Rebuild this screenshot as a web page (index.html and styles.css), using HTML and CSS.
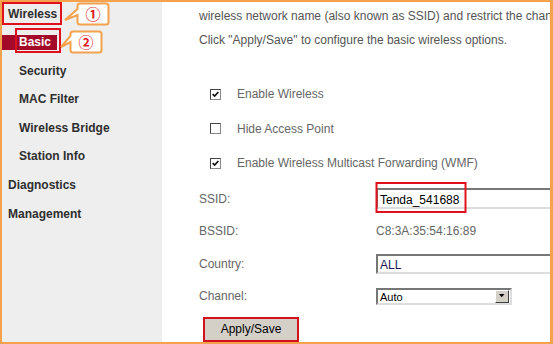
FILE: index.html
```html
<!DOCTYPE html>
<html lang="en">
<head>
    <meta charset="UTF-8">
    <title>Wireless - Basic</title>
    <link rel="stylesheet" href="styles.css">
</head>
<body>
    <div class="frame">
        <!-- Left menu -->
        <aside class="sidebar">
            <ul class="menu">
                <li class="menu-item">Wireless</li>
                <li class="menu-item sub"><span class="active">Basic</span></li>
                <li class="menu-item sub">Security</li>
                <li class="menu-item sub">MAC Filter</li>
                <li class="menu-item sub">Wireless Bridge</li>
                <li class="menu-item sub">Station Info</li>
                <li class="menu-item">Diagnostics</li>
                <li class="menu-item">Management</li>
            </ul>
        </aside>

        <!-- Settings page -->
        <main class="content">
            <p class="intro">wireless network name (also known as SSID) and restrict the channel set based on country requirements.</p>
            <p class="intro">Click "Apply/Save" to configure the basic wireless options.</p>

            <div class="checks">
                <div class="check-row"><span class="box checked"><svg viewBox="0 0 11 11"><path d="M2 5 L4.5 7.5 L9 2.5" /></svg></span>Enable Wireless</div>
                <div class="check-row"><span class="box"></span>Hide Access Point</div>
                <div class="check-row"><span class="box checked"><svg viewBox="0 0 11 11"><path d="M2 5 L4.5 7.5 L9 2.5" /></svg></span>Enable Wireless Multicast Forwarding (WMF)</div>
            </div>

            <div class="form">
                <div class="form-label">SSID:</div>
                <div class="form-field"><span class="field">Tenda_541688</span></div>
                <div class="form-label">BSSID:</div>
                <div class="form-field value">C8:3A:35:54:16:89</div>
                <div class="form-label">Country:</div>
                <div class="form-field"><span class="field country">ALL</span></div>
                <div class="form-label">Channel:</div>
                <div class="form-field">
                    <span class="select">Auto<span class="select-btn"><svg viewBox="0 0 9 5"><path d="M0 0 H7 L3.5 4 Z" /></svg></span></span>
                </div>
            </div>

            <button class="apply">Apply/Save</button>
        </main>

        <!-- Annotation marks drawn over the screenshot -->
        <svg class="notes" width="553" height="344" viewBox="0 0 553 344">
            <rect class="red-box" x="3" y="3" width="58" height="21" />
            <rect class="red-box" x="16" y="29" width="44" height="23" />
            <rect class="red-box" x="376.5" y="183" width="89" height="29" />
            <path class="callout" d="M80 3.5 H106 Q108.5 3.5 108.5 6 V22 Q108.5 24.5 106 24.5 H80 Q77.5 24.5 77.5 22 V15 L65 20 L77.5 9 V6 Q77.5 3.5 80 3.5 Z" />
            <path class="callout" d="M73 31.5 H99 Q101.5 31.5 101.5 34 V50 Q101.5 52.5 99 52.5 H73 Q70.5 52.5 70.5 50 V42 L61 47 L70.5 36 V34 Q70.5 31.5 73 31.5 Z" />
            <text class="num" x="93" y="19.5">①</text>
            <text class="num" x="86" y="47.5">②</text>
        </svg>
    </div>
</body>
</html>
```

FILE: styles.css
```css
body {
    margin: 0;
    padding: 0;
    font-family: "Liberation Sans", Arial, sans-serif;
    background: #fff;
}

.frame {
    position: relative;
    width: 553px;
    height: 344px;
    box-sizing: border-box;
    border: 2px solid #f4a24c;
    border-right-width: 3px;
    display: flex;
    overflow: hidden;
}

/* Sidebar */
.sidebar {
    width: 160px;
    flex: none;
    background: #eeeeee;
}

.menu {
    list-style: none;
    margin: -2.5px 0 0 0;
    padding: 0;
}

.menu-item {
    height: 28.6px;
    line-height: 28.6px;
    padding-left: 6px;
    font-size: 12px;
    font-weight: bold;
    color: #2e2e2e;
    white-space: nowrap;
}

.menu-item.sub {
    padding-left: 17px;
}

.active {
    display: inline-block;
    height: 15px;
    line-height: 15px;
    margin-left: -17px;
    padding: 0 6px 0 17px;
    background: #a30a2a;
    color: #fff;
}

/* Main content */
.content {
    flex: 1;
    min-width: 0;
    padding: 2px 0 0 37px;
    white-space: nowrap;
    overflow: hidden;
    font-size: 12px;
    color: #666;
}

.intro {
    margin: 0;
    height: 24px;
    line-height: 24px;
    color: #555;
}

.checks {
    margin-top: 25px;
}

.check-row {
    height: 34.5px;
    display: flex;
    align-items: center;
    padding-left: 11px;
}

.box {
    width: 9px;
    height: 9px;
    margin-right: 16px;
    border: 1px solid #888;
    border-top-color: #444;
    border-left-color: #444;
    background: #fff;
    display: inline-flex;
}

.box svg {
    width: 9px;
    height: 9px;
}

.box path {
    fill: none;
    stroke: #111;
    stroke-width: 2;
}

.form {
    margin-top: 2px;
    display: grid;
    grid-template-columns: 177px 1fr;
    grid-auto-rows: 32.5px;
    align-items: center;
}

.value {
    color: #666;
}

.field {
    display: block;
    width: 200px;
    height: 21px;
    line-height: 21px;
    box-sizing: border-box;
    padding-left: 2px;
    border: 2px solid #777;
    border-right-color: #ddd;
    border-bottom-color: #ddd;
    color: #000;
    background: #fff;
}

.field.country {
    color: #1a1a55;
    height: 20px;
    line-height: 18px;
}

.select {
    position: relative;
    display: block;
    width: 136px;
    height: 17px;
    line-height: 14px;
    box-sizing: border-box;
    padding-left: 2px;
    border: 2px solid #777;
    border-right-color: #ddd;
    border-bottom-color: #ddd;
    color: #000;
    font-size: 11px;
}

.select-btn {
    position: absolute;
    top: 0;
    right: 1px;
    width: 14px;
    height: 13px;
    box-sizing: border-box;
    background: #d4d0c8;
    border: 1px solid #fff;
    border-right-color: #404040;
    border-bottom-color: #404040;
    display: flex;
    align-items: center;
    justify-content: center;
}

.select-btn svg {
    width: 7px;
    height: 4px;
}

.select-btn path {
    fill: #000;
}

.apply {
    display: block;
    margin: 4px 0 0 4px;
    width: 96px;
    height: 25px;
    border: 2px solid #d4121e;
    background: #d4d0c8;
    font-family: "Liberation Sans", Arial, sans-serif;
    font-size: 12px;
    color: #000;
    padding: 0;
}

/* Annotations */
.notes {
    position: absolute;
    top: -2px;
    left: -2px;
    pointer-events: none;
}

.red-box {
    fill: none;
    stroke: #e0101c;
    stroke-width: 2;
}

.callout {
    fill: #fff;
    stroke: #f4a24c;
    stroke-width: 2;
}

.num {
    font-family: "Noto Sans CJK SC", "DejaVu Sans", sans-serif;
    font-size: 15px;
    font-weight: bold;
    fill: #e01a1a;
    text-anchor: middle;
}
```
